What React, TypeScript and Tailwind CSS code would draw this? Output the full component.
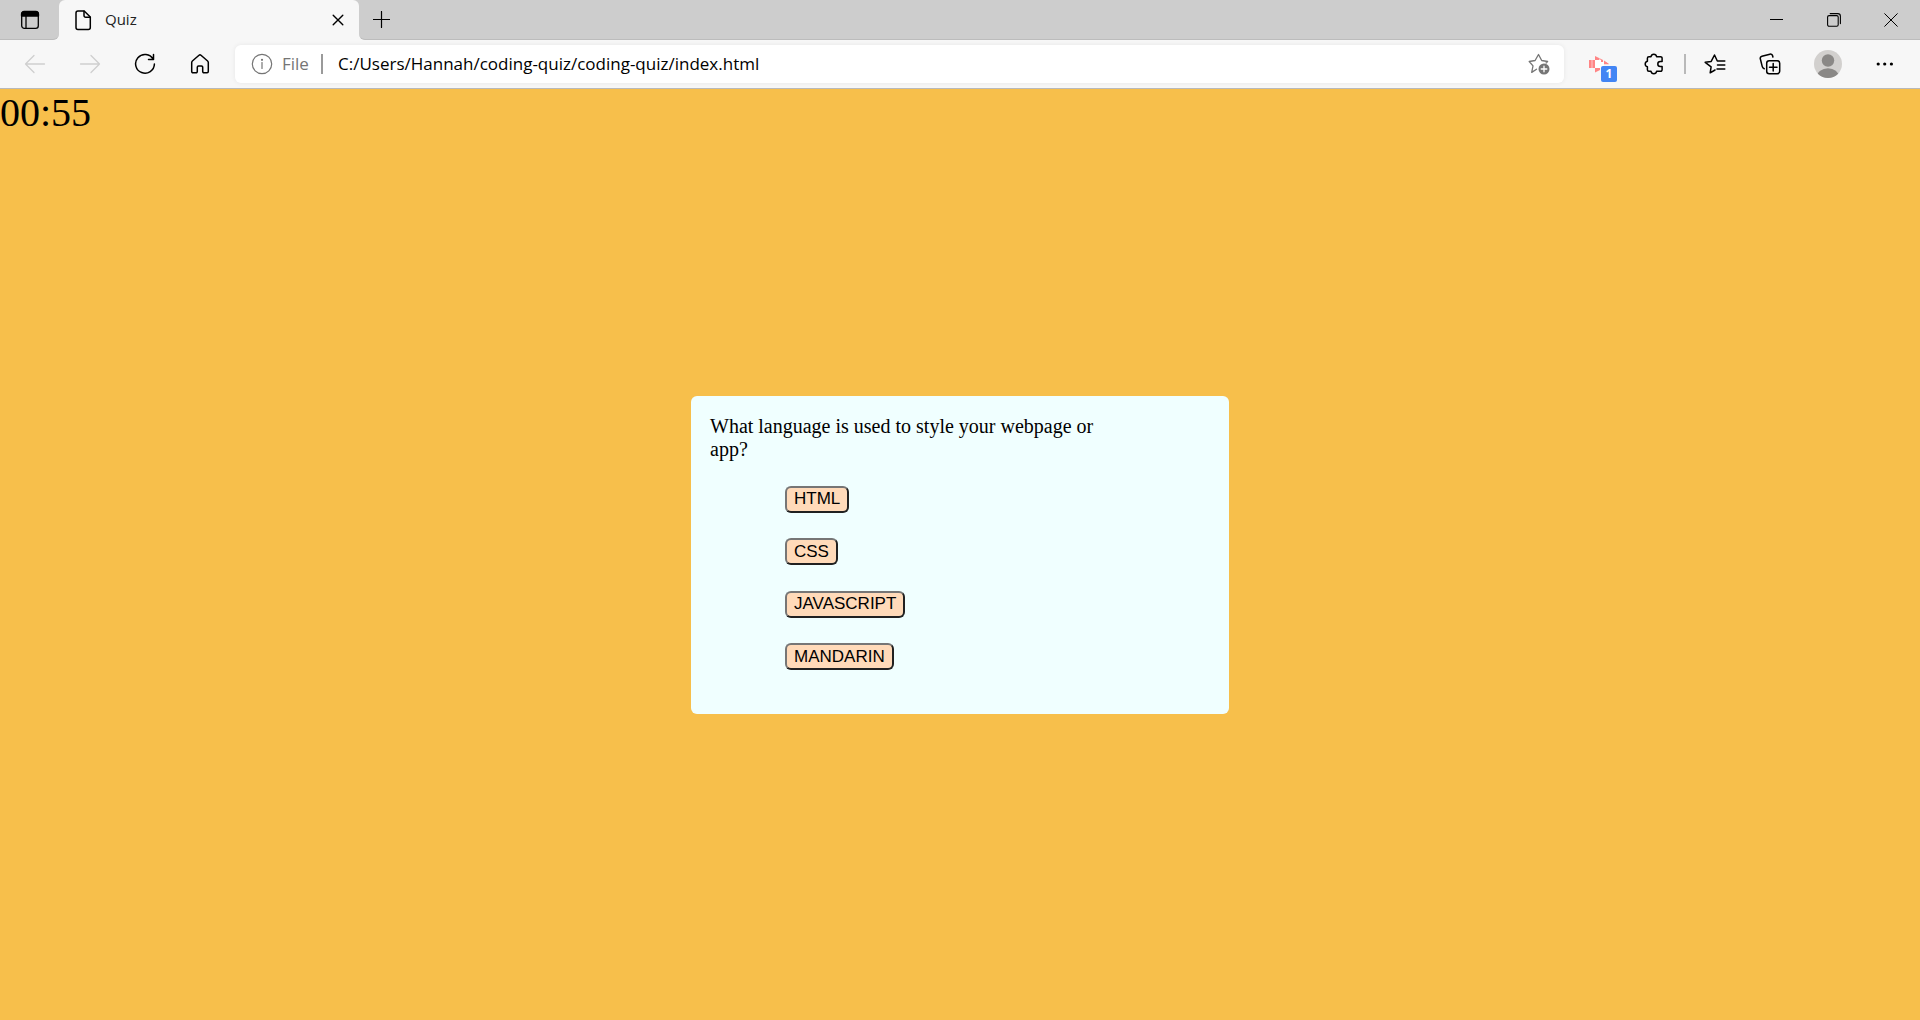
import React from "react";

const line = { fill: "none", stroke: "currentColor", strokeLinecap: "round", strokeLinejoin: "round" } as const;

function IconButton({ label, className, children }: { label: string; className: string; children: React.ReactNode }) {
  return (
    <button type="button" aria-label={label} className={`flex shrink-0 items-center justify-center ${className}`}>
      {children}
    </button>
  );
}

function TabStrip() {
  return (
    <header className="flex h-10 bg-[#f7f7f7]">
      <IconButton label="Tab actions menu" className="w-[59px] rounded-br-md border-b border-[#bcbcbc] bg-[#cdcdcd]">
        <svg width="20" height="20" viewBox="0 0 20 20" {...line} strokeWidth="1.3">
          <rect x="1.7" y="1.7" width="16.6" height="16.6" rx="2.6" />
          <path d="M1.5 6V4a2.6 2.6 0 0 1 2.6-2.6h11.8A2.6 2.6 0 0 1 18.5 4v2z" fill="currentColor" />
          <path d="M6 6v12" />
        </svg>
      </IconButton>
      <div className="w-[300px] shrink-0 bg-linear-to-b from-[#cdcdcd] from-50% to-[#f7f7f7] to-50%">
        <div className="flex h-full items-center rounded-t-md bg-[#f7f7f7] pr-2 pl-3.5">
          <svg width="20" height="22" viewBox="0 0 20 22" {...line} strokeWidth="1.5">
            <path d="M5 2h6.2L17.3 8v10.4a2 2 0 0 1-2 2H5a2 2 0 0 1-2-2V4a2 2 0 0 1 2-2z" />
            <path d="M11 2.2V6.5a1.7 1.7 0 0 0 1.7 1.7h4.4" />
          </svg>
          <span className="ml-3 flex-1 pb-0.5 text-[15px] leading-5 text-[#222]">Quiz</span>
          <IconButton label="Close tab" className="size-[26px]">
            <svg width="12" height="12" viewBox="0 0 12 12" {...line} strokeWidth="1.4">
              <path d="M1.200 1.200l9.600 9.600M10.800 1.200l-9.600 9.600" />
            </svg>
          </IconButton>
        </div>
      </div>
      <div className="flex flex-1 justify-between rounded-bl-md border-b border-[#bcbcbc] bg-[#cdcdcd]">
        <IconButton label="New tab" className="w-11">
          <svg width="17" height="17" viewBox="0 0 17 17" {...line} strokeWidth="1.2">
            <path d="M8.5 .5v16M.5 8.500h16" />
          </svg>
        </IconButton>
        <div className="flex">
          <IconButton label="Minimize" className="w-[57px]">
            <svg width="13" height="13" viewBox="0 0 13 13" {...line} strokeLinecap="butt">
              <path d="M0 6.500h13" />
            </svg>
          </IconButton>
          <IconButton label="Restore" className="w-[57px]">
            <svg width="14" height="14" viewBox="0 0 14 14" {...line} strokeWidth="1.100">
              <rect x=".6" y="2.600" width="10.600" height="10.600" rx="1.500" />
              <path d="M3.200.6h7.600a2.600 2.600 0 0 1 2.600 2.600v7.400" />
            </svg>
          </IconButton>
          <IconButton label="Close window" className="w-[58px]">
            <svg width="14" height="14" viewBox="0 0 14 14" {...line}>
              <path d="M.7.7l12.600 12.600M13.300.7L.7 13.300" />
            </svg>
          </IconButton>
        </div>
      </div>
    </header>
  );
}

function Toolbar() {
  return (
    <nav aria-label="Browser toolbar" className="flex h-[49px] items-stretch border-b border-[#b9b9b9] bg-[#f7f7f7] pr-1.5 pl-[7px]">
      <IconButton label="Back" className="w-[55px] text-[#cfcfcf]">
        <svg width="22" height="20" viewBox="0 0 22 20" {...line} strokeWidth="1.300">
          <path d="M20.500 10H1.500M10 1.500L1.500 10l8.500 8.500" />
        </svg>
      </IconButton>
      <IconButton label="Forward" className="w-[55px] text-[#cfcfcf]">
        <svg width="22" height="20" viewBox="0 0 22 20" {...line} strokeWidth="1.300">
          <path d="M1.500 10h19M12 1.500l8.500 8.500-8.500 8.500" />
        </svg>
      </IconButton>
      <IconButton label="Refresh" className="w-[55px]">
        <svg width="22" height="22" viewBox="0 0 22 22" {...line} strokeWidth="1.500">
          <path d="M19.200 6.200A9.400 9.400 0 1 0 20.400 11M19.500 1.500v5h-5" />
        </svg>
      </IconButton>
      <IconButton label="Home" className="w-[55px]">
        <svg width="20" height="20" viewBox="0 0 20 20" {...line} strokeWidth="1.500">
          <path d="M1.700 8.500a2 2 0 0 1 .7-1.500L9 1.300a1.500 1.500 0 0 1 2 0L17.600 7a2 2 0 0 1 .7 1.500v9a1.200 1.200 0 0 1-1.200 1.200h-3.200a1.200 1.200 0 0 1-1.200-1.200v-4.300a1.200 1.200 0 0 0-1.200-1.200h-3A1.200 1.200 0 0 0 7.300 13.200v4.300a1.200 1.200 0 0 1-1.200 1.200H2.900a1.200 1.200 0 0 1-1.200-1.200z" />
        </svg>
      </IconButton>
      <div className="my-[5px] ml-2 flex flex-1 items-center rounded-md bg-white pr-3.5 pl-4 shadow-[0_0_5px_rgba(0,0,0,0.07)]">
        <svg width="22" height="22" viewBox="0 0 22 22" {...line} strokeWidth="1.200" className="text-[#757575]">
          <circle cx="11" cy="11" r="9.700" />
          <path d="M11 9.500v6" />
          <circle cx="11" cy="6.800" r=".5" fill="currentColor" />
        </svg>
        <label htmlFor="address" className="ml-[9px] w-[39px] text-[17px] leading-6 text-[#757575]">File</label>
        <div className="h-5 w-0.5 bg-[#9a9a9a]" />
        <input id="address" type="text" readOnly value="C:/Users/Hannah/coding-quiz/coding-quiz/index.html" className="ml-[15px] min-w-0 flex-1 bg-transparent text-[17px] leading-6 text-black outline-none" />
        <IconButton label="Add this page to favorites" className="w-[22px] text-[#757575]">
          <svg width="22" height="22" viewBox="0 0 22 22" {...line} strokeWidth="1.300">
            <path d="M8.500 16.200l-4.800 3.200 1.300-6.500L1.200 8.500l5.900-1L10.500 1.500l3.200 6 5.900 1-1.500 1.500" />
            <circle cx="16" cy="16" r="5.500" fill="currentColor" stroke="none" />
            <path d="M16 13.200v5.600M13.200 16h5.600" stroke="white" />
          </svg>
        </IconButton>
      </div>
      <div className="ml-2 flex items-center">
        <button type="button" aria-label="Extension, 1 notification" className="relative h-full w-14">
          <svg width="22" height="18" viewBox="0 0 22 18" className="absolute top-[15px] left-[17px]">
            <path fill="#ff8585" d="M0 5h6v8H0zM6 1l8 4v2H12V5H6zM15 5.500l5 3.500h-5zM6 13h5v2l-5 2.500z" />
            <path fill="#ffcaca" d="M2.500 5h1v8h-1zM10 3.500h1.500V5H10z" />
            <path fill="white" d="M6 5h6v2h3v5h-3v1H6z" />
            <path fill="#ff8585" d="M12 5h1.500v1.500H12zM15 6l5 3.300-5 0z" />
          </svg>
          <span className="absolute top-[26px] left-[29px] flex h-4 w-4 items-center justify-center rounded-xs bg-[#4285f4] font-['Open_Sans',sans-serif] text-[12px] leading-4 font-bold text-white">1</span>
        </button>
        <IconButton label="Extensions" className="w-[52px]">
          <svg width="20" height="22" viewBox="0 0 20 22" {...line} strokeWidth="1.500">
            <path d="M7 3.700C7.300 2 8.300 1.300 9.800 1.300s2.500.7 2.800 2.400h4a1.500 1.500 0 0 1 1.500 1.500v3.300h-1.800a2.500 2.500 0 0 0 0 5h1.800v3.300a1.500 1.500 0 0 1-1.500 1.500h-4c-.3 1.700-1.300 2.400-2.800 2.400s-2.500-.7-2.800-2.400H4.900a1.500 1.500 0 0 1-1.500-1.500v-3C2 13.500 1.200 12.500 1.200 11S2 8.500 3.400 8.200v-3a1.500 1.500 0 0 1 1.500-1.500z" />
          </svg>
        </IconButton>
        <div className="mx-1 h-5 w-0.5 bg-[#b9b9b9]" />
        <IconButton label="Favorites" className="w-[50px]">
          <svg width="22" height="20" viewBox="0 0 22 20" {...line} strokeWidth="1.500">
            <path d="M11 16l-4.800 2.800.9-6L1.200 8.300l6-.9L10.500 1l2.800 6H20.800M13.500 11h7.300M13 15h7.800" />
          </svg>
        </IconButton>
        <IconButton label="Collections" className="w-[60px]">
          <svg width="22" height="22" viewBox="0 0 22 22" {...line} strokeWidth="1.500">
            <path d="M5.200 15.700a3 3 0 0 1-2-2.300L1.300 5.800a2.200 2.200 0 0 1 1.600-2.600l8-2a2.200 2.200 0 0 1 2.700 1.600l.3 1.200" />
            <rect x="7.700" y="7.700" width="13" height="13" rx="2.500" />
            <path d="M14.200 10.500v7.500M10.500 14.200h7.500" />
          </svg>
        </IconButton>
        <IconButton label="Profile" className="w-14">
          <svg width="28" height="28" viewBox="0 0 28 28">
            <defs>
              <clipPath id="avatar"><circle cx="14" cy="14" r="14" /></clipPath>
            </defs>
            <g clipPath="url(#avatar)">
              <rect width="28" height="28" fill="#d2d0ce" />
              <circle cx="14" cy="10.500" r="6.200" fill="#8a8886" />
              <ellipse cx="14" cy="27" rx="11" ry="8.800" fill="#8a8886" />
            </g>
          </svg>
        </IconButton>
        <IconButton label="Settings and more" className="w-[58px]">
          <svg width="18" height="4" viewBox="0 0 18 4" fill="currentColor">
            <circle cx="2.200" cy="2" r="1.600" /><circle cx="8.700" cy="2" r="1.600" /><circle cx="15.400" cy="2" r="1.600" />
          </svg>
        </IconButton>
      </div>
    </nav>
  );
}

const answers = ["HTML", "CSS", "JAVASCRIPT", "MANDARIN"];

export default function App() {
  return (
    <div className="flex min-h-screen flex-col bg-[#f7bf4b] font-['Open_Sans',sans-serif] text-black">
      <TabStrip />
      <Toolbar />
      <main className="relative flex flex-1 items-center justify-center font-['Liberation_Serif',serif]">
        <div role="timer" className="absolute top-0 left-0 text-[40px] leading-[48px]">00:55</div>
        <section className="w-[538px] rounded-md bg-[#f0ffff] px-[19px] pt-[19px] pb-[43px]">
          <h1 className="w-[400px] text-[20px] leading-[23px]">What language is used to style your webpage or app?</h1>
          <div className="mt-[25px] ml-[75px] flex h-[185px] flex-col items-start justify-between">
            {answers.map((answer) => (
              <button key={answer} type="button" className="h-[27px] rounded-md border-2 border-t-[#767676] border-r-[#212121] border-b-[#212121] border-l-[#767676] bg-[#ffdab9] px-[7px] font-['Liberation_Sans',sans-serif] text-[17px] leading-5">
                {answer}
              </button>
            ))}
          </div>
        </section>
      </main>
    </div>
  );
}
